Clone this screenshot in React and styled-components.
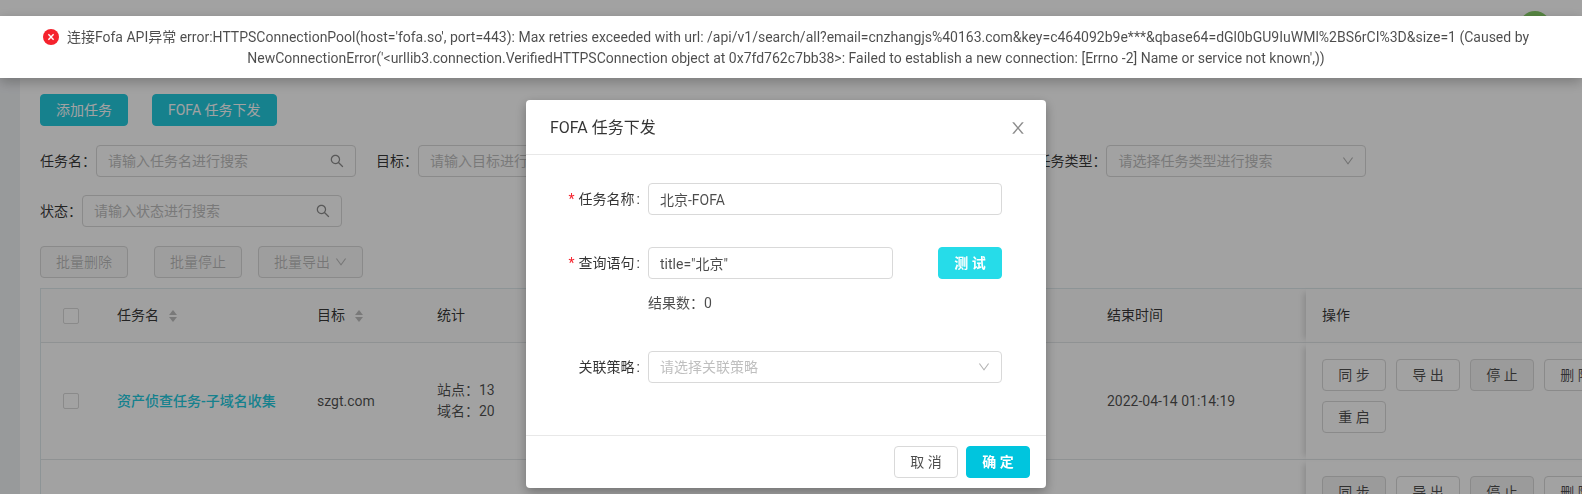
import React from "react";
import styled, { createGlobalStyle, css } from "styled-components";

const GlobalStyle = createGlobalStyle`
  *, *::before, *::after { box-sizing: border-box; }
  body {
    margin: 0;
    overflow: hidden;
    background: #f0f2f5;
    color: rgba(0, 0, 0, 0.7);
    font: 14px/21px Roboto, "Noto Sans CJK SC", sans-serif;
  }
  button, input, select { font: inherit; color: inherit; }
`;

/* ---------- icons ---------- */

const IconSvg = styled.svg`
  display: block;
  flex: none;
  width: ${({ $size }) => $size}px;
  height: ${({ $size }) => $size}px;
  fill: currentColor;
`;

const iconPaths = {
  down: "M884 256h-75c-5.1 0-9.9 2.5-12.9 6.6L512 654.2 227.9 262.6c-3-4.1-7.8-6.6-12.9-6.6h-75c-6.5 0-10.3 7.4-6.5 12.7l352.6 486.1c12.8 17.6 39 17.6 51.7 0l352.6-486.1c3.9-5.3.1-12.7-6.4-12.7z",
  search:
    "M909.6 854.5L649.9 594.8C690.2 542.7 712 479 712 412c0-80.2-31.3-155.4-87.9-212.1-56.6-56.7-132-87.9-212.1-87.9s-155.5 31.3-212.1 87.9C143.2 256.5 112 331.8 112 412c0 80.1 31.3 155.5 87.9 212.1C256.5 680.8 331.8 712 412 712c67 0 130.6-21.8 182.7-62l259.7 259.6a8.2 8.2 0 0 0 11.6 0l43.6-43.5a8.2 8.2 0 0 0 0-11.6zM570.4 570.4C528 612.7 471.8 636 412 636s-116-23.3-158.4-65.6C211.3 528 188 471.8 188 412s23.3-116.1 65.6-158.4C296 211.3 352.2 188 412 188s116.1 23.2 158.4 65.6S636 352.2 636 412s-23.3 116.1-65.6 158.4z",
  close:
    "M563.8 512l262.5-312.9c4.4-5.2.7-13.1-6.1-13.1h-79.8c-4.7 0-9.2 2.1-12.3 5.7L511.6 449.8 295.1 191.7c-3-3.6-7.5-5.7-12.3-5.7H203c-6.8 0-10.5 7.9-6.1 13.1L459.4 512 196.9 824.9A7.95 7.95 0 0 0 203 838h79.8c4.7 0 9.2-2.1 12.3-5.7l216.5-258.1 216.5 258.1c3 3.6 7.5 5.7 12.3 5.7h79.8c6.8 0 10.5-7.9 6.1-13.1L563.8 512z",
};

function Icon({ name, size }) {
  return (
    <IconSvg $size={size} viewBox="64 64 896 896" aria-hidden="true">
      <path d={iconPaths[name]} />
    </IconSvg>
  );
}

/* ---------- shared controls ---------- */

const variants = {
  default: css`
    background: #fff;
    border-color: #d9d9d9;
  `,
  muted: css`
    background: #f5f5f5;
    border-color: #d9d9d9;
  `,
  disabled: css`
    background: #f9f9f9;
    border-color: #d9d9d9;
    color: rgba(0, 0, 0, 0.25);
  `,
  teal: css`
    background: #24cbdf;
    border-color: #24cbdf;
    color: #fff;
  `,
  bright: css`
    background: #26dce9;
    border-color: #26dce9;
    color: #fff;
    font-weight: 700;
  `,
  primary: css`
    background: #00c5de;
    border-color: #00c5de;
    color: #fff;
    font-weight: 700;
  `,
};

const Button = styled.button`
  display: inline-flex;
  align-items: center;
  justify-content: center;
  gap: 5px;
  min-width: 64px;
  height: 32px;
  padding: 0 15px;
  border: 1px solid;
  border-radius: 4px;
  white-space: nowrap;
  cursor: pointer;
  ${({ $variant = "default" }) => variants[$variant]}
`;

const Control = styled.span`
  position: relative;
  display: block;
  width: ${({ $width }) => $width || "100%"};
`;

const fieldBox = css`
  display: block;
  width: 100%;
  height: 32px;
  margin: 0;
  padding: 0 11px;
  border: 1px solid #d9d9d9;
  border-radius: 4px;
  background: #fff;
  outline: none;
`;

const TextInput = styled.input`
  ${fieldBox}
  &::placeholder {
    color: #bfbfbf;
    opacity: 1;
  }
`;

const SelectInput = styled.select`
  ${fieldBox}
  appearance: none;
  color: #bfbfbf;
`;

const Suffix = styled.span`
  position: absolute;
  top: 0;
  right: 12px;
  display: flex;
  align-items: center;
  height: 32px;
  color: ${({ $color }) => $color};
  pointer-events: none;
`;

function SearchBox({ id, placeholder }) {
  return (
    <Control $width="260px">
      <TextInput id={id} placeholder={placeholder} />
      <Suffix $color="rgba(0, 0, 0, 0.45)">
        <Icon name="search" size={14} />
      </Suffix>
    </Control>
  );
}

function SelectBox({ id, placeholder, width }) {
  return (
    <Control $width={width}>
      <SelectInput id={id} defaultValue="">
        <option value="">{placeholder}</option>
      </SelectInput>
      <Suffix $color="rgba(0, 0, 0, 0.3)">
        <Icon name="down" size={12} />
      </Suffix>
    </Control>
  );
}

/* ---------- page ---------- */

const Page = styled.div`
  height: 100vh;
  overflow: hidden;
`;

const Header = styled.header`
  display: flex;
  align-items: center;
  justify-content: flex-end;
  height: 54px;
  padding-right: 31px;
  background: #fff;
`;

const Avatar = styled.span`
  width: 32px;
  height: 32px;
  border-radius: 50%;
  background: #87d068;
`;

const Content = styled.main`
  margin: 20px 0 0 20px;
  padding: 20px 0 0 20px;
  background: #fff;
  overflow: hidden;
`;

const ButtonRow = styled.div`
  display: flex;
  gap: ${({ $gap }) => $gap}px;
`;

const Filters = styled.form`
  display: flex;
  flex-wrap: wrap;
  gap: 18px 20px;
  margin: 19px 0;
`;

const Filter = styled.div`
  display: flex;
  align-items: center;
`;

const FilterLabel = styled.label`
  color: rgba(0, 0, 0, 0.8);
  white-space: nowrap;
`;

/* ---------- task table ---------- */

const Table = styled.table`
  width: 1600px;
  margin-top: 10px;
  table-layout: fixed;
  border-collapse: separate;
  border-spacing: 0;
  border: solid #dfe9ec;
  border-width: 1px 0 0 1px;
`;

const Col = styled.col`
  width: ${({ $width }) => $width}px;
`;

const cell = css`
  padding: 16px;
  border-bottom: 1px solid #e2e6e8;
  text-align: ${({ $center }) => ($center ? "center" : "left")};
  vertical-align: middle;
  ${({ $fixed }) => $fixed && "box-shadow: -6px 0 6px -4px rgba(0, 0, 0, 0.15);"}
`;

const Th = styled.th`
  ${cell}
  background: #fcfcfc;
  color: rgba(0, 0, 0, 0.8);
  font-weight: 400;
`;

const Td = styled.td`
  ${cell}
`;

const Checkbox = styled.input.attrs({ type: "checkbox" })`
  appearance: none;
  display: block;
  width: 16px;
  height: 16px;
  margin: 0 auto;
  border: 1px solid #d9d9d9;
  border-radius: 2px;
  background: #fff;
`;

const SortLabel = styled.span`
  display: inline-flex;
  align-items: center;
  gap: 10px;
`;

const TaskLink = styled.a`
  color: #24cbdf;
  font-weight: 500;
  text-decoration: none;
`;

const Actions = styled.div`
  display: flex;
  flex-wrap: wrap;
  gap: 10px;
  padding-bottom: 10px;
`;

function Sorter() {
  return (
    <svg width="8" height="12" viewBox="0 0 8 12" fill="#bfbfbf" aria-hidden="true">
      <path d="M4 0 8 5H0z" />
      <path d="M4 12 0 7h8z" />
    </svg>
  );
}

const columns = [60, 200, 120, 120, 150, 150, 250, 215, 334];

const tasks = [
  {
    name: "资产侦查任务-子域名收集",
    target: "szgt.com",
    sites: 13,
    domains: 20,
    end: "2022-04-14 01:14:19",
    muted: ["停 止"],
  },
  {
    muted: ["同 步", "停 止"],
  },
];

const actionNames = ["同 步", "导 出", "停 止", "删 除", "重 启"];

function TaskTable() {
  return (
    <Table>
      <colgroup>
        {columns.map((width, i) => (
          <Col key={i} $width={width} />
        ))}
      </colgroup>
      <thead>
        <tr>
          <Th $center>
            <Checkbox aria-label="全选" />
          </Th>
          <Th>
            <SortLabel>任务名<Sorter /></SortLabel>
          </Th>
          <Th>
            <SortLabel>目标<Sorter /></SortLabel>
          </Th>
          <Th>统计</Th>
          <Th />
          <Th />
          <Th />
          <Th>结束时间</Th>
          <Th $fixed>操作</Th>
        </tr>
      </thead>
      <tbody>
        {tasks.map((task, i) => (
          <tr key={i}>
            <Td $center>
              <Checkbox aria-label="选择任务" />
            </Td>
            <Td>{task.name && <TaskLink href="#task">{task.name}</TaskLink>}</Td>
            <Td>{task.target}</Td>
            <Td>
              {task.name && (
                <>
                  <div>站点：{task.sites}</div>
                  <div>域名：{task.domains}</div>
                </>
              )}
            </Td>
            <Td />
            <Td />
            <Td />
            <Td>{task.end}</Td>
            <Td $fixed>
              <Actions>
                {actionNames.map((name) => (
                  <Button
                    key={name}
                    type="button"
                    $variant={task.muted.includes(name) ? "muted" : "default"}
                  >
                    {name}
                  </Button>
                ))}
              </Actions>
            </Td>
          </tr>
        ))}
      </tbody>
    </Table>
  );
}

/* ---------- modal ---------- */

const Mask = styled.div`
  position: fixed;
  inset: 0;
  background: rgba(0, 0, 0, 0.365);
`;

const ModalWrap = styled.div`
  position: fixed;
  inset: 0;
  display: flex;
  align-items: flex-start;
  justify-content: center;
  padding: 100px 10px 0 0;
`;

const Modal = styled.section`
  width: 520px;
  border-radius: 4px;
  background: #fff;
  box-shadow: 0 4px 12px rgba(0, 0, 0, 0.3);
`;

const ModalHeader = styled.div`
  display: flex;
  align-items: center;
  justify-content: space-between;
  padding: 17px 20px 15px 24px;
  border-bottom: 1px solid #e8e8e8;
`;

const ModalTitle = styled.h2`
  margin: 0;
  color: rgba(0, 0, 0, 0.8);
  font-size: 16px;
  font-weight: 400;
  line-height: 22px;
`;

const CloseButton = styled.button`
  display: flex;
  padding: 0;
  border: 0;
  background: none;
  color: rgba(0, 0, 0, 0.45);
  cursor: pointer;
`;

const ModalForm = styled.form`
  display: grid;
  grid-template-columns: 98px 354px;
  row-gap: 32px;
  padding: 28px 24px 52px;
`;

const FormLabel = styled.label`
  display: flex;
  align-items: center;
  justify-content: flex-end;
  height: 32px;
  padding-right: 8px;
  color: rgba(0, 0, 0, 0.8);

  &::after {
    content: ":";
    margin-left: 2px;
  }
`;

const Required = styled.span`
  margin-right: 4px;
  color: #f5222d;
`;

const QueryRow = styled.div`
  display: flex;
  justify-content: space-between;
`;

const Result = styled.p`
  margin: 14px 0 5px;
`;

const ModalFooter = styled.div`
  display: flex;
  justify-content: flex-end;
  gap: 8px;
  padding: 10px 16px;
  border-top: 1px solid #e8e8e8;
`;

/* ---------- error notice ---------- */

const Notice = styled.div`
  position: fixed;
  top: 16px;
  left: 0;
  right: 0;
  padding: 11px 26px 9px 16px;
  background: #fff;
  box-shadow: 0 4px 12px rgba(0, 0, 0, 0.25);
  text-align: center;
`;

const NoticeIcon = styled.svg`
  width: 16px;
  height: 16px;
  margin-right: 8px;
  vertical-align: -3px;
`;

export default function App() {
  return (
    <>
      <GlobalStyle />
      <Page>
        <Header>
          <Avatar />
        </Header>
        <Content>
          <ButtonRow $gap={24}>
            <Button type="button" $variant="teal">添加任务</Button>
            <Button type="button" $variant="teal">FOFA 任务下发</Button>
          </ButtonRow>
          <Filters>
            <Filter>
              <FilterLabel htmlFor="f-name">任务名：</FilterLabel>
              <SearchBox id="f-name" placeholder="请输入任务名进行搜索" />
            </Filter>
            <Filter>
              <FilterLabel htmlFor="f-target">目标：</FilterLabel>
              <SearchBox id="f-target" placeholder="请输入目标进行搜索" />
            </Filter>
            <Filter>
              <FilterLabel htmlFor="f-id">任务 ID：</FilterLabel>
              <SearchBox id="f-id" placeholder="请输入任务 ID 进行搜索" />
            </Filter>
            <Filter>
              <FilterLabel htmlFor="f-type">任务类型：</FilterLabel>
              <SelectBox id="f-type" width="260px" placeholder="请选择任务类型进行搜索" />
            </Filter>
            <Filter>
              <FilterLabel htmlFor="f-status">状态：</FilterLabel>
              <SearchBox id="f-status" placeholder="请输入状态进行搜索" />
            </Filter>
          </Filters>
          <ButtonRow $gap={26}>
            <Button type="button" $variant="disabled" disabled>批量删除</Button>
            <ButtonRow $gap={16}>
              <Button type="button" $variant="disabled" disabled>批量停止</Button>
              <Button type="button" $variant="disabled" disabled>
                批量导出
                <Icon name="down" size={12} />
              </Button>
            </ButtonRow>
          </ButtonRow>
          <TaskTable />
        </Content>
      </Page>

      <Mask />
      <ModalWrap>
        <Modal role="dialog" aria-labelledby="modal-title">
          <ModalHeader>
            <ModalTitle id="modal-title">FOFA 任务下发</ModalTitle>
            <CloseButton type="button" aria-label="关闭">
              <Icon name="close" size={16} />
            </CloseButton>
          </ModalHeader>
          <ModalForm>
            <FormLabel htmlFor="m-name">
              <Required>*</Required>任务名称
            </FormLabel>
            <TextInput id="m-name" defaultValue="北京-FOFA" />
            <FormLabel htmlFor="m-query">
              <Required>*</Required>查询语句
            </FormLabel>
            <div>
              <QueryRow>
                <Control $width="245px">
                  <TextInput id="m-query" defaultValue={'title="北京"'} />
                </Control>
                <Button type="button" $variant="bright">测 试</Button>
              </QueryRow>
              <Result>结果数：0</Result>
            </div>
            <FormLabel htmlFor="m-policy">关联策略</FormLabel>
            <SelectBox id="m-policy" placeholder="请选择关联策略" />
          </ModalForm>
          <ModalFooter>
            <Button type="button">取 消</Button>
            <Button type="button" $variant="primary">确 定</Button>
          </ModalFooter>
        </Modal>
      </ModalWrap>

      <Notice role="alert">
        <NoticeIcon viewBox="0 0 16 16" aria-hidden="true">
          <circle cx="8" cy="8" r="8" fill="#f5222d" />
          <path d="M5.4 5.2 10.6 10.8M10.6 5.2 5.4 10.8" stroke="#fff" strokeWidth="1.4" />
        </NoticeIcon>
        连接Fofa API异常 error:HTTPSConnectionPool(host='fofa.so', port=443): Max retries exceeded with url:
        {" /api/v1/search/all?email=cnzhangjs%40163.com&key=c464092b9e***&qbase64=dGl0bGU9IuWMl%2BS6rCI%3D&size=1 (Caused by"}
        <br />
        {"NewConnectionError('<urllib3.connection.VerifiedHTTPSConnection object at 0x7fd762c7bb38>: Failed to establish a new connection: [Errno -2] Name or service not known',))"}
      </Notice>
    </>
  );
}
